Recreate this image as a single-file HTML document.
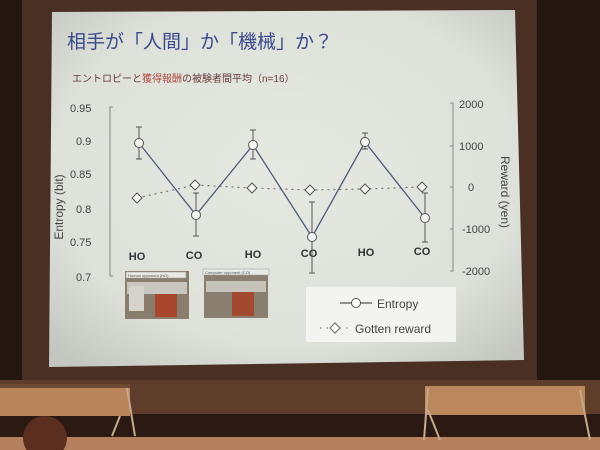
<!DOCTYPE html>
<html><head><meta charset="utf-8"><style>
html,body{margin:0;padding:0;width:600px;height:450px;overflow:hidden;background:#2a1f19}
</style></head><body>
<svg width="600" height="450" viewBox="0 0 600 450" xmlns="http://www.w3.org/2000/svg" style="position:absolute;left:0;top:0">
<defs>
<radialGradient id="sg" cx="0.5" cy="0.45" r="0.7">
<stop offset="0" stop-color="#e6e9e2"/><stop offset="0.7" stop-color="#dde1d9"/><stop offset="1" stop-color="#c3c7bf"/>
</radialGradient>
</defs>
<rect x="0" y="0" width="600" height="450" fill="#24170f"/>
<rect x="22" y="0" width="515" height="385" fill="#4a3024"/>
<rect x="0" y="380" width="600" height="36" fill="#5e3d2b"/>
<rect x="0" y="414" width="600" height="24" fill="#2a1a13"/>
<rect x="0" y="437" width="600" height="13" fill="#b5805e"/>
<polygon points="52,12 515,10 524,360 49,367" fill="url(#sg)"/>
<!-- tables -->
<rect x="0" y="384" width="130" height="32" fill="#b98459"/>
<rect x="0" y="384" width="130" height="4" fill="#6e4a33"/>
<path d="M127,388 L135,436 M120,416 L112,436" stroke="#c8a88c" stroke-width="2"/>
<rect x="425" y="386" width="160" height="29" fill="#bb885d"/>
<path d="M428,388 L424,440 M428,410 L440,440 M580,390 L590,440" stroke="#c8a88c" stroke-width="2"/>
<circle cx="45" cy="438" r="22" fill="#5a2f1f"/>
<g font-family="Liberation Sans, 'Noto Sans CJK JP', sans-serif">
<text x="67" y="48" font-size="19" fill="#3b4a8c">相手が「人間」か「機械」か？</text>
<text x="72" y="82" font-size="10" fill="#6b3a3a">エントロピーと<tspan fill="#b44a44">獲得報酬</tspan>の被験者間平均（n=16）</text>
<g font-size="11" fill="#444">
<text x="70" y="112">0.95</text><text x="76" y="145">0.9</text><text x="70" y="178">0.85</text>
<text x="76" y="213">0.8</text><text x="70" y="246">0.75</text><text x="76" y="281">0.7</text>
<text x="459" y="108">2000</text><text x="459" y="150">1000</text><text x="468" y="191">0</text>
<text x="462" y="233">-1000</text><text x="462" y="275">-2000</text>
</g>
<text transform="translate(63,207) rotate(-90)" font-size="12" fill="#444" text-anchor="middle">Entropy (bit)</text>
<text transform="translate(501,192) rotate(90)" font-size="12" fill="#444" text-anchor="middle">Reward (yen)</text>
<g font-size="11" font-weight="bold" fill="#333" text-anchor="middle">
<text x="137" y="260">HO</text><text x="194" y="259">CO</text><text x="253" y="258">HO</text>
<text x="309" y="257">CO</text><text x="366" y="256">HO</text><text x="422" y="255">CO</text>
</g>
</g>
<g stroke="#888" fill="none" stroke-width="1">
<path d="M113,107 H110 V276 H113"/>
<path d="M450,103 H453 V271 H450"/>
<path d="M450,146 h3 M450,187 h3 M450,229 h3"/>
</g>
<g stroke="#555" stroke-width="1">
<path d="M139,127V159 M136,127h6 M136,159h6"/>
<path d="M196,193V236 M193,193h6 M193,236h6"/>
<path d="M253,130V159 M250,130h6 M250,159h6"/>
<path d="M312,202V273 M309,202h6 M309,273h6"/>
<path d="M365,133V149 M362,133h6 M362,149h6"/>
<path d="M425,193V242 M422,193h6 M422,242h6"/>
</g>
<polyline points="137,198 195,185 252,188 310,190 365,189 422,187" fill="none" stroke="#777" stroke-width="1.2" stroke-dasharray="2,4"/>
<polyline points="139,143 196,215 253,145 312,237 365,142 425,218" fill="none" stroke="#4f5a7a" stroke-width="1.3"/>
<g fill="#f4f5f2" stroke="#555" stroke-width="1">
<path d="M137,193l5,5-5,5-5,-5z"/><path d="M195,180l5,5-5,5-5,-5z"/><path d="M252,183l5,5-5,5-5,-5z"/>
<path d="M310,185l5,5-5,5-5,-5z"/><path d="M365,184l5,5-5,5-5,-5z"/><path d="M422,182l5,5-5,5-5,-5z"/>
<circle cx="139" cy="143" r="4.5"/><circle cx="196" cy="215" r="4.5"/><circle cx="253" cy="145" r="4.5"/>
<circle cx="312" cy="237" r="4.5"/><circle cx="365" cy="142" r="4.5"/><circle cx="425" cy="218" r="4.5"/>
</g>
<!-- photos -->
<rect x="125" y="271" width="64" height="48" fill="#8b7d6e"/>
<rect x="127" y="282" width="60" height="12" fill="#c9c6bf"/>
<rect x="155" y="294" width="22" height="23" fill="#a8472e"/>
<rect x="129" y="286" width="15" height="25" fill="#d6d2cc"/>
<rect x="126" y="272" width="60" height="6" fill="#e8e8e4" stroke="#999" stroke-width="0.5"/>
<text x="128" y="277" font-size="4" fill="#555" font-family="Liberation Sans, sans-serif">Human opponent (HO)</text>
<rect x="204" y="270" width="64" height="48" fill="#8a7e70"/>
<rect x="206" y="281" width="60" height="11" fill="#c6c3bb"/>
<rect x="232" y="292" width="22" height="24" fill="#a14a30"/>
<rect x="203" y="269" width="66" height="6" fill="#e8e8e4" stroke="#999" stroke-width="0.5"/>
<text x="205" y="274" font-size="4" fill="#555" font-family="Liberation Sans, sans-serif">Computer opponent (CO)</text>
<!-- legend -->
<rect x="306" y="287" width="150" height="55" fill="#f3f4f1"/>
<path d="M340,303 H372" stroke="#555" stroke-width="1.2"/>
<circle cx="356" cy="303" r="4.5" fill="#fff" stroke="#555"/>
<path d="M320,328 H348" stroke="#666" stroke-dasharray="1.5,5"/>
<path d="M335,323l5,5-5,5-5,-5z" fill="#fff" stroke="#666"/>
<g font-family="Liberation Sans, sans-serif" font-size="12" fill="#444">
<text x="377" y="308">Entropy</text><text x="355" y="333">Gotten reward</text>
</g>
</svg>
</body></html>
